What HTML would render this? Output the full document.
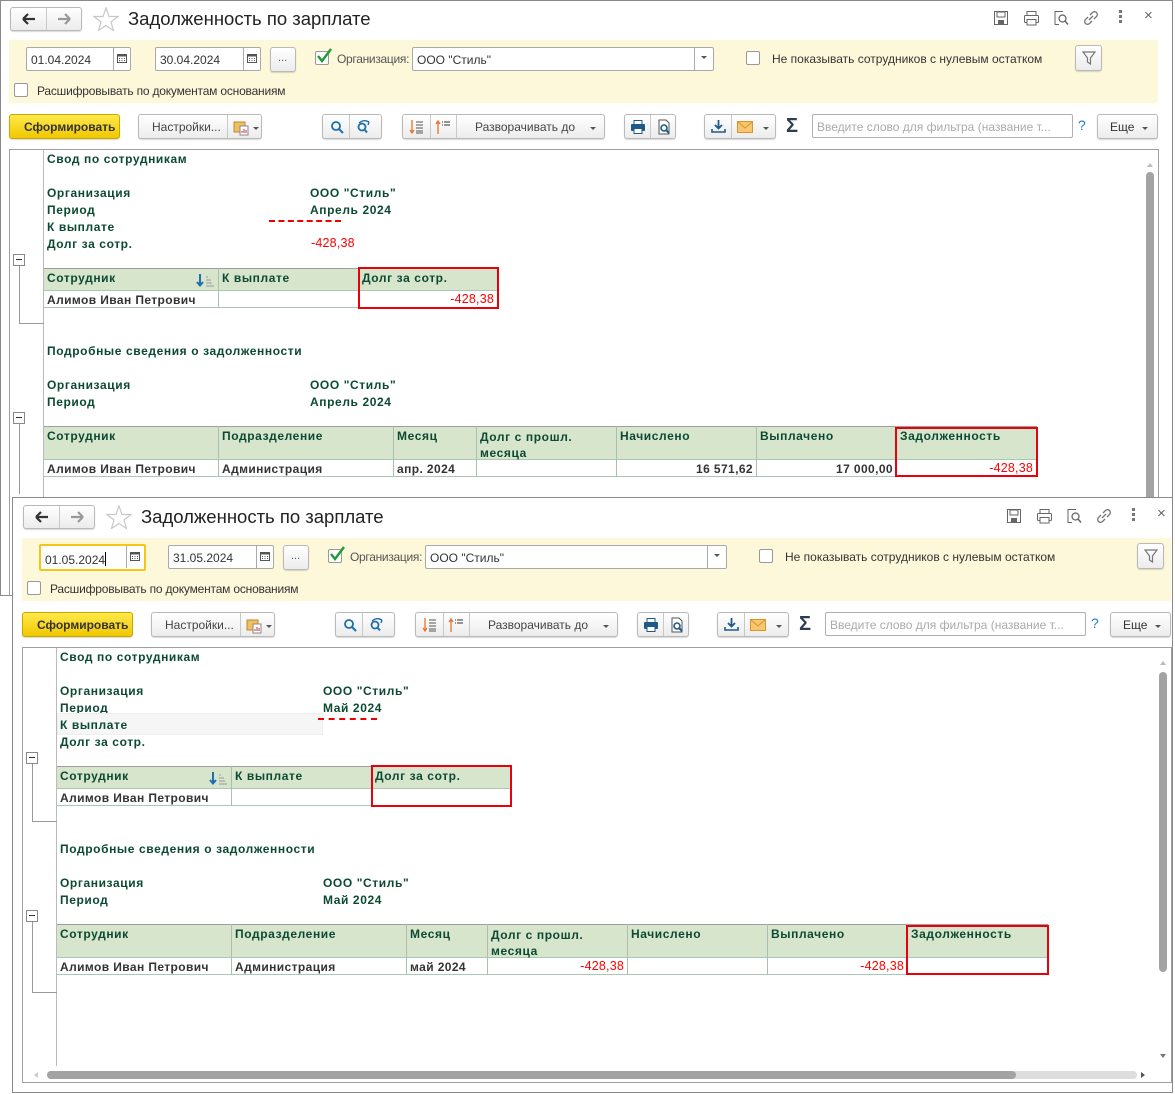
<!DOCTYPE html>
<html><head><meta charset="utf-8">
<style>
*{box-sizing:border-box;margin:0;padding:0}
body{width:1175px;height:1094px;background:#fff;position:relative;overflow:hidden;font-family:"Liberation Sans",sans-serif}
.w{position:absolute;background:#fff;overflow:hidden;z-index:1}
.brd{position:absolute;left:0;top:0;right:0;bottom:0;border:1px solid #8a8a8a;pointer-events:none;z-index:50}
.a{position:absolute;white-space:nowrap}
.btn{position:absolute;height:25px;border:1px solid #b9b9b9;border-radius:3px;background:linear-gradient(#fff,#ececec);box-shadow:0 1px 1px rgba(0,0,0,.15)}
.div{position:absolute;top:0;bottom:0;width:1px;background:#c8c8c8}
.inp{position:absolute;height:24px;border:1px solid #a9a9a9;border-radius:2px;background:#fff;font-size:12px;color:#333;padding:5px 0 0 4px;overflow:hidden;white-space:nowrap}
.ui{font-size:12px;color:#444}
.cb{position:absolute;width:14px;height:14px;border:1px solid #999;border-radius:2px;background:#fff}
.r{position:absolute;white-space:nowrap;font:bold 12px "Liberation Sans",sans-serif;color:#0b4a31;letter-spacing:.6px}
.v{position:absolute;white-space:nowrap;font:bold 12px "Liberation Sans",sans-serif;color:#333;letter-spacing:.4px}
.red{position:absolute;white-space:nowrap;font:12.5px "Liberation Sans",sans-serif;color:#f00;letter-spacing:.2px}
.hd{position:absolute;background:#d8e5cd;border-top:1px solid #9e9e9e;border-bottom:1px solid #a9c7b5}
.vl{position:absolute;width:1px;background:#a9c0b0}
.rb{position:absolute;border:2px solid #e8000d}
.yel{position:absolute;background:#fdf8da}
</style></head><body>

<!-- ============ TOP WINDOW ============ -->
<div class="w" style="left:0;top:0;width:1173px;height:596px">
<div class="brd"></div>
<div class="btn" style="left:10px;top:7px;width:72px;height:24px"><div class="div" style="left:35px"></div>
<svg class="a" style="left:11px;top:5px" width="14" height="12"><path d="M1 6H13M1 6L6 1M1 6L6 11" stroke="#333" stroke-width="2.2" fill="none"/></svg>
<svg class="a" style="left:46px;top:5px" width="14" height="12"><path d="M1 6H13M13 6L8 1M13 6L8 11" stroke="#999" stroke-width="2.2" fill="none"/></svg></div>
<svg class="a" style="left:93px;top:7px" width="26" height="24"><path d="M13 1L16 9.5H25L18 15L20.5 23.5L13 18.5L5.5 23.5L8 15L1 9.5H10Z" fill="none" stroke="#c8c8c8" stroke-width="1.2"/></svg>
<div class="a" style="left:128px;top:8px;font-size:18.5px;color:#222">Задолженность по зарплате</div>
<svg class="a" style="left:993px;top:10px" width="16" height="16"><rect x="1.5" y="1.5" width="13" height="13" fill="none" stroke="#666"/><rect x="4" y="2" width="8" height="5" fill="none" stroke="#666"/><rect x="5" y="10" width="6" height="4" fill="#666"/></svg>
<svg class="a" style="left:1023px;top:10px" width="17" height="16"><rect x="4" y="1.5" width="9" height="4" fill="none" stroke="#666"/><rect x="1.5" y="5.5" width="14" height="7" rx="1" fill="none" stroke="#666"/><rect x="4" y="9.5" width="9" height="5.5" fill="#fff" stroke="#666"/></svg>
<svg class="a" style="left:1053px;top:10px" width="16" height="16"><path d="M10 1.5H2V14.5H6" fill="none" stroke="#666"/><circle cx="9.5" cy="8.5" r="3.5" fill="none" stroke="#666" stroke-width="1.3"/><path d="M12 11L15 14.5" stroke="#666" stroke-width="1.5"/></svg>
<svg class="a" style="left:1083px;top:10px" width="16" height="16"><path d="M7 5L9.5 2.5A2.5 2.5 0 0 1 13.5 6.5L11 9M9 11L6.5 13.5A2.5 2.5 0 0 1 2.5 9.5L5 7M6 10L10 6" fill="none" stroke="#777" stroke-width="1.3"/></svg>
<div class="a" style="left:1119px;top:10px;width:3px;height:3px;background:#777;box-shadow:0 5px 0 #777,0 10px 0 #777"></div>
<div class="a" style="left:1144px;top:7px;font-size:15px;color:#666">×</div>
<div class="yel" style="left:9px;top:40px;width:1149px;height:63px"></div>
<div class="inp" style="left:26px;top:47px;width:105px">01.04.2024</div>
<div class="a" style="left:113px;top:48px;width:1px;height:22px;background:#a9a9a9"></div>
<svg class="a" style="left:117px;top:53px" width="10" height="10"><rect x="0.5" y="1.5" width="9" height="8" fill="none" stroke="#555"/><rect x="0.5" y="1.5" width="9" height="2" fill="#555"/><path d="M2 5.5h1M4.5 5.5h1M7 5.5h1M2 7.5h1M4.5 7.5h1M7 7.5h1" stroke="#555"/></svg>
<div class="a ui" style="left:161px;top:51px">–</div>
<div class="inp" style="left:155px;top:47px;width:106px">30.04.2024</div>
<div class="a" style="left:243px;top:48px;width:1px;height:22px;background:#a9a9a9"></div>
<svg class="a" style="left:247px;top:53px" width="10" height="10"><rect x="0.5" y="1.5" width="9" height="8" fill="none" stroke="#555"/><rect x="0.5" y="1.5" width="9" height="2" fill="#555"/><path d="M2 5.5h1M4.5 5.5h1M7 5.5h1M2 7.5h1M4.5 7.5h1M7 7.5h1" stroke="#555"/></svg>
<div class="btn" style="left:270px;top:47px;width:26px"><div class="a" style="left:7px;top:4px;font-size:11px;color:#555">...</div></div>
<div class="cb" style="left:315px;top:51px"></div>
<svg class="a" style="left:315px;top:47px" width="18" height="17"><path d="M3 9L7 14L16 2" fill="none" stroke="#1f9b3a" stroke-width="2.4"/></svg>
<div class="a ui" style="left:337px;top:52px;color:#555;letter-spacing:-.3px">Организация:</div>
<div class="inp" style="left:412px;top:47px;width:302px">ООО "Стиль"</div>
<div class="a" style="left:694px;top:48px;width:1px;height:22px;background:#a9a9a9"></div>
<div class="a" style="left:701px;top:56px;border:3px solid transparent;border-top:3px solid #555"></div>
<div class="cb" style="left:746px;top:51px"></div>
<div class="a ui" style="left:772px;top:52px;color:#333">Не показывать сотрудников с нулевым остатком</div>
<div class="btn" style="left:1075px;top:45px;width:27px;height:26px"><svg class="a" style="left:6px;top:5px" width="14" height="14"><path d="M1 1H13L8.5 7V13L5.5 11V7Z" fill="none" stroke="#777" stroke-width="1.2"/></svg></div>
<div class="cb" style="left:14px;top:83px"></div>
<div class="a ui" style="left:37px;top:84px;color:#333;letter-spacing:-.2px">Расшифровывать по документам основаниям</div>
<div class="btn" style="left:9px;top:114px;width:111px;background:linear-gradient(#ffe94a,#f0c800);border-color:#c8a800"><div class="a" style="left:14px;top:5px;font-size:12px;font-weight:bold;color:#333">Сформировать</div></div>
<div class="btn" style="left:138px;top:114px;width:124px"><div class="a ui" style="left:13px;top:5px">Настройки...</div><div class="div" style="left:88px"></div>
<svg class="a" style="left:94px;top:4px" width="18" height="17"><rect x="1" y="3" width="11" height="10" fill="#f0c060" stroke="#b88a30"/><rect x="7" y="7" width="8" height="9" fill="#fff" stroke="#888"/><path d="M9 14v-2M11 14v-4M13 14v-3" stroke="#c33"/></svg>
<div class="a" style="left:114px;top:12px;border:3px solid transparent;border-top:3px solid #555"></div></div>
<div class="btn" style="left:322px;top:114px;width:60px"><div class="div" style="left:26px"></div>
<svg class="a" style="left:7px;top:5px" width="14" height="14"><circle cx="6" cy="6" r="4" fill="none" stroke="#1d6fae" stroke-width="1.8"/><path d="M9 9L13 13" stroke="#1d6fae" stroke-width="2"/></svg>
<svg class="a" style="left:33px;top:4px" width="16" height="15"><circle cx="6" cy="8" r="3.5" fill="none" stroke="#1d6fae" stroke-width="1.8"/><path d="M8.5 10.5L11 13.5" stroke="#1d6fae" stroke-width="2"/><path d="M3 4Q8 0 13 3M13 3L10 2M13 3L12 6" fill="none" stroke="#1d6fae" stroke-width="1.4"/></svg></div>
<div class="btn" style="left:402px;top:114px;width:203px"><div class="div" style="left:27px"></div><div class="div" style="left:53px"></div>
<svg class="a" style="left:6px;top:4px" width="16" height="16"><path d="M3 1V14M1 11L3 14L5 11" fill="none" stroke="#e8742a" stroke-width="1.3"/><path d="M7 3h7M7 6h7M7 9h7M7 12h7M7 14h7" stroke="#555"/></svg>
<svg class="a" style="left:32px;top:4px" width="16" height="16"><path d="M3 15V2M1 5L3 2L5 5" fill="none" stroke="#e8742a" stroke-width="1.3"/><path d="M7 3h1M9 3h6M7 6h1M9 6h6" stroke="#333"/></svg>
<div class="a ui" style="left:72px;top:5px">Разворачивать до</div>
<div class="a" style="left:187px;top:12px;border:3px solid transparent;border-top:3px solid #555"></div></div>
<div class="btn" style="left:624px;top:114px;width:52px"><div class="div" style="left:25px"></div>
<svg class="a" style="left:5px;top:4px" width="16" height="16"><rect x="4" y="1.5" width="8" height="4" fill="none" stroke="#1d5a8a"/><rect x="1" y="5" width="14" height="7" rx="1" fill="#1d5a8a"/><rect x="4" y="9.5" width="8" height="5" fill="#fff" stroke="#1d5a8a"/></svg>
<svg class="a" style="left:31px;top:4px" width="16" height="16"><path d="M10 1H3V15H13V4Z" fill="#fff" stroke="#555"/><circle cx="8" cy="9" r="3" fill="none" stroke="#1d5a8a" stroke-width="1.6"/><path d="M10 11L13 14" stroke="#1d5a8a" stroke-width="2"/></svg></div>
<div class="btn" style="left:704px;top:114px;width:72px"><div class="div" style="left:26px"></div>
<svg class="a" style="left:6px;top:4px" width="15" height="15"><path d="M7.5 1V9M4 6L7.5 9.5L11 6" fill="none" stroke="#1d5a8a" stroke-width="1.8"/><path d="M1 10V13H14V10" fill="none" stroke="#1d5a8a" stroke-width="1.6"/></svg>
<svg class="a" style="left:32px;top:6px" width="16" height="12"><rect x="0.5" y="0.5" width="15" height="11" fill="#f7c66e" stroke="#d8952e"/><path d="M1 1L8 7L15 1" fill="none" stroke="#d8952e"/></svg>
<div class="a" style="left:58px;top:12px;border:3px solid transparent;border-top:3px solid #555"></div></div>
<div class="a" style="left:786px;top:115px;font-size:20px;color:#2c3e50;font-weight:bold">Σ</div>
<div class="inp" style="left:812px;top:114px;width:261px;color:#aaa;border-color:#b0b0b0">Введите слово для фильтра (название т...</div>
<div class="a" style="left:1078px;top:117px;font-size:14px;color:#1d7ed0">?</div>
<div class="btn" style="left:1097px;top:114px;width:61px"><div class="a ui" style="left:12px;top:5px;color:#333">Еще</div><div class="a" style="left:44px;top:12px;border:3px solid transparent;border-top:3px solid #555"></div></div>
<div class="a" style="left:9px;top:149px;width:1150px;height:460px;border:1px solid #a0a0a0"></div>
<div class="a" style="left:43px;top:150px;width:1px;height:450px;background:#bbb"></div>
<div class="a" style="left:1146px;top:172px;width:8px;height:330px;border-radius:4px;background:#a3a3a3"></div>
<div class="a" style="left:1147px;top:160px;border:3px solid transparent;border-bottom:4px solid #bbb"></div>
<div class="r" style="left:47px;top:152px">Свод по сотрудникам</div>
<div class="r" style="left:47px;top:186px">Организация</div>
<div class="r" style="left:47px;top:203px">Период</div>
<div class="r" style="left:47px;top:220px">К выплате</div>
<div class="r" style="left:47px;top:237px">Долг за сотр.</div>
<div class="r" style="left:310px;top:186px">ООО "Стиль"</div>
<div class="r" style="left:310px;top:203px">Апрель 2024</div>
<div class="a" style="left:269px;top:220px;width:72px;border-top:2px dashed #e00"></div>
<div class="red" style="left:311px;top:236px">-428,38</div>
<div class="a" style="left:13px;top:254px;width:12px;height:12px;border:1px solid #888;background:#fff"><div class="a" style="left:2px;top:4px;width:6px;height:1px;background:#333"></div></div>
<div class="a" style="left:19px;top:266px;width:1px;height:58px;background:#999"></div>
<div class="a" style="left:19px;top:323px;width:25px;height:1px;background:#999"></div>
<div class="hd" style="left:44px;top:268px;width:454px;height:23px"></div>
<div class="a" style="left:44px;top:307px;width:454px;height:1px;background:#a9c7b5"></div>
<div class="vl" style="left:218px;top:268px;height:40px"></div>
<div class="vl" style="left:358px;top:268px;height:40px"></div>
<div class="r" style="left:47px;top:271px">Сотрудник</div>
<svg class="a" style="left:196px;top:272px" width="20" height="16"><path d="M4 2V13M1 10L4 13.5L7 10" fill="none" stroke="#1d6fae" stroke-width="2"/><path d="M10 5h2M10 8h5M10 11h6M10 14h8" stroke="#999"/></svg>
<div class="r" style="left:222px;top:271px">К выплате</div>
<div class="r" style="left:362px;top:271px">Долг за сотр.</div>
<div class="v" style="left:47px;top:293px">Алимов Иван Петрович</div>
<div class="red" style="left:430px;top:292px;width:64px;text-align:right">-428,38</div>
<div class="rb" style="left:358px;top:267px;width:141px;height:42px"></div>
<div class="r" style="left:47px;top:344px">Подробные сведения о задолженности</div>
<div class="r" style="left:47px;top:378px">Организация</div>
<div class="r" style="left:47px;top:395px">Период</div>
<div class="r" style="left:310px;top:378px">ООО "Стиль"</div>
<div class="r" style="left:310px;top:395px">Апрель 2024</div>
<div class="a" style="left:13px;top:412px;width:12px;height:12px;border:1px solid #888;background:#fff"><div class="a" style="left:2px;top:4px;width:6px;height:1px;background:#333"></div></div>
<div class="a" style="left:19px;top:424px;width:1px;height:70px;background:#999"></div>
<div class="hd" style="left:44px;top:426px;width:993px;height:34px"></div>
<div class="a" style="left:44px;top:476px;width:993px;height:1px;background:#a9c7b5"></div>
<div class="vl" style="left:218px;top:426px;height:51px"></div>
<div class="vl" style="left:393px;top:426px;height:51px"></div>
<div class="vl" style="left:476px;top:426px;height:51px"></div>
<div class="vl" style="left:616px;top:426px;height:51px"></div>
<div class="vl" style="left:756px;top:426px;height:51px"></div>
<div class="vl" style="left:896px;top:426px;height:51px"></div>
<div class="r" style="left:47px;top:429px">Сотрудник</div>
<div class="r" style="left:222px;top:429px">Подразделение</div>
<div class="r" style="left:397px;top:429px">Месяц</div>
<div class="r" style="left:480px;top:429px;line-height:16px">Долг с прошл.<br>месяца</div>
<div class="r" style="left:620px;top:429px">Начислено</div>
<div class="r" style="left:760px;top:429px">Выплачено</div>
<div class="r" style="left:900px;top:429px">Задолженность</div>
<div class="v" style="left:47px;top:462px">Алимов Иван Петрович</div>
<div class="v" style="left:222px;top:462px">Администрация</div>
<div class="v" style="left:397px;top:462px">апр. 2024</div>
<div class="v" style="left:660px;top:462px;width:93px;text-align:right">16 571,62</div>
<div class="v" style="left:800px;top:462px;width:93px;text-align:right">17 000,00</div>
<div class="red" style="left:940px;top:461px;width:93px;text-align:right">-428,38</div>
<div class="rb" style="left:895px;top:427px;width:143px;height:50px"></div>
</div>

<!-- ============ BOTTOM WINDOW ============ -->
<div class="w" style="left:12px;top:497px;width:1161px;height:596px;z-index:2">
<div class="brd"></div>
<div style="position:absolute;left:1px;top:1px;width:1160px;height:595px">
<div class="btn" style="left:10px;top:7px;width:72px;height:24px"><div class="div" style="left:35px"></div>
<svg class="a" style="left:11px;top:5px" width="14" height="12"><path d="M1 6H13M1 6L6 1M1 6L6 11" stroke="#333" stroke-width="2.2" fill="none"/></svg>
<svg class="a" style="left:46px;top:5px" width="14" height="12"><path d="M1 6H13M13 6L8 1M13 6L8 11" stroke="#999" stroke-width="2.2" fill="none"/></svg></div>
<svg class="a" style="left:93px;top:7px" width="26" height="24"><path d="M13 1L16 9.5H25L18 15L20.5 23.5L13 18.5L5.5 23.5L8 15L1 9.5H10Z" fill="none" stroke="#c8c8c8" stroke-width="1.2"/></svg>
<div class="a" style="left:128px;top:8px;font-size:18.5px;color:#222">Задолженность по зарплате</div>
<svg class="a" style="left:993px;top:10px" width="16" height="16"><rect x="1.5" y="1.5" width="13" height="13" fill="none" stroke="#666"/><rect x="4" y="2" width="8" height="5" fill="none" stroke="#666"/><rect x="5" y="10" width="6" height="4" fill="#666"/></svg>
<svg class="a" style="left:1023px;top:10px" width="17" height="16"><rect x="4" y="1.5" width="9" height="4" fill="none" stroke="#666"/><rect x="1.5" y="5.5" width="14" height="7" rx="1" fill="none" stroke="#666"/><rect x="4" y="9.5" width="9" height="5.5" fill="#fff" stroke="#666"/></svg>
<svg class="a" style="left:1053px;top:10px" width="16" height="16"><path d="M10 1.5H2V14.5H6" fill="none" stroke="#666"/><circle cx="9.5" cy="8.5" r="3.5" fill="none" stroke="#666" stroke-width="1.3"/><path d="M12 11L15 14.5" stroke="#666" stroke-width="1.5"/></svg>
<svg class="a" style="left:1083px;top:10px" width="16" height="16"><path d="M7 5L9.5 2.5A2.5 2.5 0 0 1 13.5 6.5L11 9M9 11L6.5 13.5A2.5 2.5 0 0 1 2.5 9.5L5 7M6 10L10 6" fill="none" stroke="#777" stroke-width="1.3"/></svg>
<div class="a" style="left:1119px;top:10px;width:3px;height:3px;background:#777;box-shadow:0 5px 0 #777,0 10px 0 #777"></div>
<div class="a" style="left:1144px;top:7px;font-size:15px;color:#666">×</div>
<div class="yel" style="left:9px;top:40px;width:1149px;height:63px"></div>
<div class="inp" style="left:26px;top:46px;width:107px;height:27px;border:2px solid #f5c518;padding-top:6px">01.05.2024<span style="display:inline-block;width:1px;height:14px;background:#000;vertical-align:-2px"></span></div>
<div class="a" style="left:113px;top:48px;width:1px;height:22px;background:#a9a9a9"></div>
<svg class="a" style="left:117px;top:53px" width="10" height="10"><rect x="0.5" y="1.5" width="9" height="8" fill="none" stroke="#555"/><rect x="0.5" y="1.5" width="9" height="2" fill="#555"/><path d="M2 5.5h1M4.5 5.5h1M7 5.5h1M2 7.5h1M4.5 7.5h1M7 7.5h1" stroke="#555"/></svg>
<div class="a ui" style="left:161px;top:51px">–</div>
<div class="inp" style="left:155px;top:47px;width:106px">31.05.2024</div>
<div class="a" style="left:243px;top:48px;width:1px;height:22px;background:#a9a9a9"></div>
<svg class="a" style="left:247px;top:53px" width="10" height="10"><rect x="0.5" y="1.5" width="9" height="8" fill="none" stroke="#555"/><rect x="0.5" y="1.5" width="9" height="2" fill="#555"/><path d="M2 5.5h1M4.5 5.5h1M7 5.5h1M2 7.5h1M4.5 7.5h1M7 7.5h1" stroke="#555"/></svg>
<div class="btn" style="left:270px;top:47px;width:26px"><div class="a" style="left:7px;top:4px;font-size:11px;color:#555">...</div></div>
<div class="cb" style="left:315px;top:51px"></div>
<svg class="a" style="left:315px;top:47px" width="18" height="17"><path d="M3 9L7 14L16 2" fill="none" stroke="#1f9b3a" stroke-width="2.4"/></svg>
<div class="a ui" style="left:337px;top:52px;color:#555;letter-spacing:-.3px">Организация:</div>
<div class="inp" style="left:412px;top:47px;width:302px">ООО "Стиль"</div>
<div class="a" style="left:694px;top:48px;width:1px;height:22px;background:#a9a9a9"></div>
<div class="a" style="left:701px;top:56px;border:3px solid transparent;border-top:3px solid #555"></div>
<div class="cb" style="left:746px;top:51px"></div>
<div class="a ui" style="left:772px;top:52px;color:#333">Не показывать сотрудников с нулевым остатком</div>
<div class="btn" style="left:1124px;top:45px;width:27px;height:26px"><svg class="a" style="left:6px;top:5px" width="14" height="14"><path d="M1 1H13L8.5 7V13L5.5 11V7Z" fill="none" stroke="#777" stroke-width="1.2"/></svg></div>
<div class="cb" style="left:14px;top:83px"></div>
<div class="a ui" style="left:37px;top:84px;color:#333;letter-spacing:-.2px">Расшифровывать по документам основаниям</div>
<div class="btn" style="left:9px;top:114px;width:111px;background:linear-gradient(#ffe94a,#f0c800);border-color:#c8a800"><div class="a" style="left:14px;top:5px;font-size:12px;font-weight:bold;color:#333">Сформировать</div></div>
<div class="btn" style="left:138px;top:114px;width:124px"><div class="a ui" style="left:13px;top:5px">Настройки...</div><div class="div" style="left:88px"></div>
<svg class="a" style="left:94px;top:4px" width="18" height="17"><rect x="1" y="3" width="11" height="10" fill="#f0c060" stroke="#b88a30"/><rect x="7" y="7" width="8" height="9" fill="#fff" stroke="#888"/><path d="M9 14v-2M11 14v-4M13 14v-3" stroke="#c33"/></svg>
<div class="a" style="left:114px;top:12px;border:3px solid transparent;border-top:3px solid #555"></div></div>
<div class="btn" style="left:322px;top:114px;width:60px"><div class="div" style="left:26px"></div>
<svg class="a" style="left:7px;top:5px" width="14" height="14"><circle cx="6" cy="6" r="4" fill="none" stroke="#1d6fae" stroke-width="1.8"/><path d="M9 9L13 13" stroke="#1d6fae" stroke-width="2"/></svg>
<svg class="a" style="left:33px;top:4px" width="16" height="15"><circle cx="6" cy="8" r="3.5" fill="none" stroke="#1d6fae" stroke-width="1.8"/><path d="M8.5 10.5L11 13.5" stroke="#1d6fae" stroke-width="2"/><path d="M3 4Q8 0 13 3M13 3L10 2M13 3L12 6" fill="none" stroke="#1d6fae" stroke-width="1.4"/></svg></div>
<div class="btn" style="left:402px;top:114px;width:203px"><div class="div" style="left:27px"></div><div class="div" style="left:53px"></div>
<svg class="a" style="left:6px;top:4px" width="16" height="16"><path d="M3 1V14M1 11L3 14L5 11" fill="none" stroke="#e8742a" stroke-width="1.3"/><path d="M7 3h7M7 6h7M7 9h7M7 12h7M7 14h7" stroke="#555"/></svg>
<svg class="a" style="left:32px;top:4px" width="16" height="16"><path d="M3 15V2M1 5L3 2L5 5" fill="none" stroke="#e8742a" stroke-width="1.3"/><path d="M7 3h1M9 3h6M7 6h1M9 6h6" stroke="#333"/></svg>
<div class="a ui" style="left:72px;top:5px">Разворачивать до</div>
<div class="a" style="left:187px;top:12px;border:3px solid transparent;border-top:3px solid #555"></div></div>
<div class="btn" style="left:624px;top:114px;width:52px"><div class="div" style="left:25px"></div>
<svg class="a" style="left:5px;top:4px" width="16" height="16"><rect x="4" y="1.5" width="8" height="4" fill="none" stroke="#1d5a8a"/><rect x="1" y="5" width="14" height="7" rx="1" fill="#1d5a8a"/><rect x="4" y="9.5" width="8" height="5" fill="#fff" stroke="#1d5a8a"/></svg>
<svg class="a" style="left:31px;top:4px" width="16" height="16"><path d="M10 1H3V15H13V4Z" fill="#fff" stroke="#555"/><circle cx="8" cy="9" r="3" fill="none" stroke="#1d5a8a" stroke-width="1.6"/><path d="M10 11L13 14" stroke="#1d5a8a" stroke-width="2"/></svg></div>
<div class="btn" style="left:704px;top:114px;width:72px"><div class="div" style="left:26px"></div>
<svg class="a" style="left:6px;top:4px" width="15" height="15"><path d="M7.5 1V9M4 6L7.5 9.5L11 6" fill="none" stroke="#1d5a8a" stroke-width="1.8"/><path d="M1 10V13H14V10" fill="none" stroke="#1d5a8a" stroke-width="1.6"/></svg>
<svg class="a" style="left:32px;top:6px" width="16" height="12"><rect x="0.5" y="0.5" width="15" height="11" fill="#f7c66e" stroke="#d8952e"/><path d="M1 1L8 7L15 1" fill="none" stroke="#d8952e"/></svg>
<div class="a" style="left:58px;top:12px;border:3px solid transparent;border-top:3px solid #555"></div></div>
<div class="a" style="left:786px;top:115px;font-size:20px;color:#2c3e50;font-weight:bold">Σ</div>
<div class="inp" style="left:812px;top:114px;width:261px;color:#aaa;border-color:#b0b0b0">Введите слово для фильтра (название т...</div>
<div class="a" style="left:1078px;top:117px;font-size:14px;color:#1d7ed0">?</div>
<div class="btn" style="left:1097px;top:114px;width:61px"><div class="a ui" style="left:12px;top:5px;color:#333">Еще</div><div class="a" style="left:44px;top:12px;border:3px solid transparent;border-top:3px solid #555"></div></div>
<div class="a" style="left:9px;top:149px;width:1150px;height:436px;border:1px solid #a0a0a0"></div>
<div class="a" style="left:43px;top:150px;width:1px;height:418px;background:#bbb"></div>
<div class="a" style="left:1146px;top:174px;width:8px;height:300px;border-radius:4px;background:#a3a3a3"></div>
<div class="a" style="left:1147px;top:160px;border:3px solid transparent;border-bottom:4px solid #bbb"></div>
<div class="a" style="left:1147px;top:556px;border:3px solid transparent;border-top:4px solid #777"></div>
<div class="a" style="left:34px;top:573px;width:1090px;height:8px;border-radius:4px;background:#ddd"></div>
<div class="a" style="left:34px;top:573px;width:969px;height:8px;border-radius:4px;background:#a3a3a3"></div>
<div class="a" style="left:1128px;top:574px;border:3px solid transparent;border-left:4px solid #555"></div>
<div class="a" style="left:18px;top:574px;border:3px solid transparent;border-right:4px solid #ccc"></div>
<div class="r" style="left:47px;top:152px">Свод по сотрудникам</div>
<div class="r" style="left:47px;top:186px">Организация</div>
<div class="r" style="left:47px;top:203px">Период</div>
<div class="a" style="left:44px;top:215px;width:266px;height:22px;background:#f6f6f6;border:1px solid #eee"></div>
<div class="r" style="left:47px;top:220px">К выплате</div>
<div class="r" style="left:47px;top:237px">Долг за сотр.</div>
<div class="r" style="left:310px;top:186px">ООО "Стиль"</div>
<div class="r" style="left:310px;top:203px">Май 2024</div>
<div class="a" style="left:305px;top:220px;width:59px;border-top:2px dashed #e00"></div>
<div class="a" style="left:13px;top:254px;width:12px;height:12px;border:1px solid #888;background:#fff"><div class="a" style="left:2px;top:4px;width:6px;height:1px;background:#333"></div></div>
<div class="a" style="left:19px;top:266px;width:1px;height:58px;background:#999"></div>
<div class="a" style="left:19px;top:323px;width:25px;height:1px;background:#999"></div>
<div class="hd" style="left:44px;top:268px;width:454px;height:23px"></div>
<div class="a" style="left:44px;top:307px;width:454px;height:1px;background:#a9c7b5"></div>
<div class="vl" style="left:218px;top:268px;height:40px"></div>
<div class="vl" style="left:358px;top:268px;height:40px"></div>
<div class="r" style="left:47px;top:271px">Сотрудник</div>
<svg class="a" style="left:196px;top:272px" width="20" height="16"><path d="M4 2V13M1 10L4 13.5L7 10" fill="none" stroke="#1d6fae" stroke-width="2"/><path d="M10 5h2M10 8h5M10 11h6M10 14h8" stroke="#999"/></svg>
<div class="r" style="left:222px;top:271px">К выплате</div>
<div class="r" style="left:362px;top:271px">Долг за сотр.</div>
<div class="v" style="left:47px;top:293px">Алимов Иван Петрович</div>
<div class="rb" style="left:358px;top:267px;width:141px;height:42px"></div>
<div class="r" style="left:47px;top:344px">Подробные сведения о задолженности</div>
<div class="r" style="left:47px;top:378px">Организация</div>
<div class="r" style="left:47px;top:395px">Период</div>
<div class="r" style="left:310px;top:378px">ООО "Стиль"</div>
<div class="r" style="left:310px;top:395px">Май 2024</div>
<div class="a" style="left:13px;top:412px;width:12px;height:12px;border:1px solid #888;background:#fff"><div class="a" style="left:2px;top:4px;width:6px;height:1px;background:#333"></div></div>
<div class="a" style="left:19px;top:424px;width:1px;height:70px;background:#999"></div>
<div class="a" style="left:19px;top:494px;width:25px;height:1px;background:#999"></div>
<div class="hd" style="left:44px;top:426px;width:991px;height:34px"></div>
<div class="a" style="left:44px;top:476px;width:991px;height:1px;background:#a9c7b5"></div>
<div class="vl" style="left:218px;top:426px;height:51px"></div>
<div class="vl" style="left:393px;top:426px;height:51px"></div>
<div class="vl" style="left:474px;top:426px;height:51px"></div>
<div class="vl" style="left:614px;top:426px;height:51px"></div>
<div class="vl" style="left:754px;top:426px;height:51px"></div>
<div class="vl" style="left:894px;top:426px;height:51px"></div>
<div class="r" style="left:47px;top:429px">Сотрудник</div>
<div class="r" style="left:222px;top:429px">Подразделение</div>
<div class="r" style="left:397px;top:429px">Месяц</div>
<div class="r" style="left:478px;top:429px;line-height:16px">Долг с прошл.<br>месяца</div>
<div class="r" style="left:618px;top:429px">Начислено</div>
<div class="r" style="left:758px;top:429px">Выплачено</div>
<div class="r" style="left:898px;top:429px">Задолженность</div>
<div class="v" style="left:47px;top:462px">Алимов Иван Петрович</div>
<div class="v" style="left:222px;top:462px">Администрация</div>
<div class="v" style="left:397px;top:462px">май 2024</div>
<div class="red" style="left:518px;top:461px;width:93px;text-align:right">-428,38</div>
<div class="red" style="left:798px;top:461px;width:93px;text-align:right">-428,38</div>
<div class="rb" style="left:893px;top:427px;width:143px;height:50px"></div>
</div>
</div>
</body></html>
